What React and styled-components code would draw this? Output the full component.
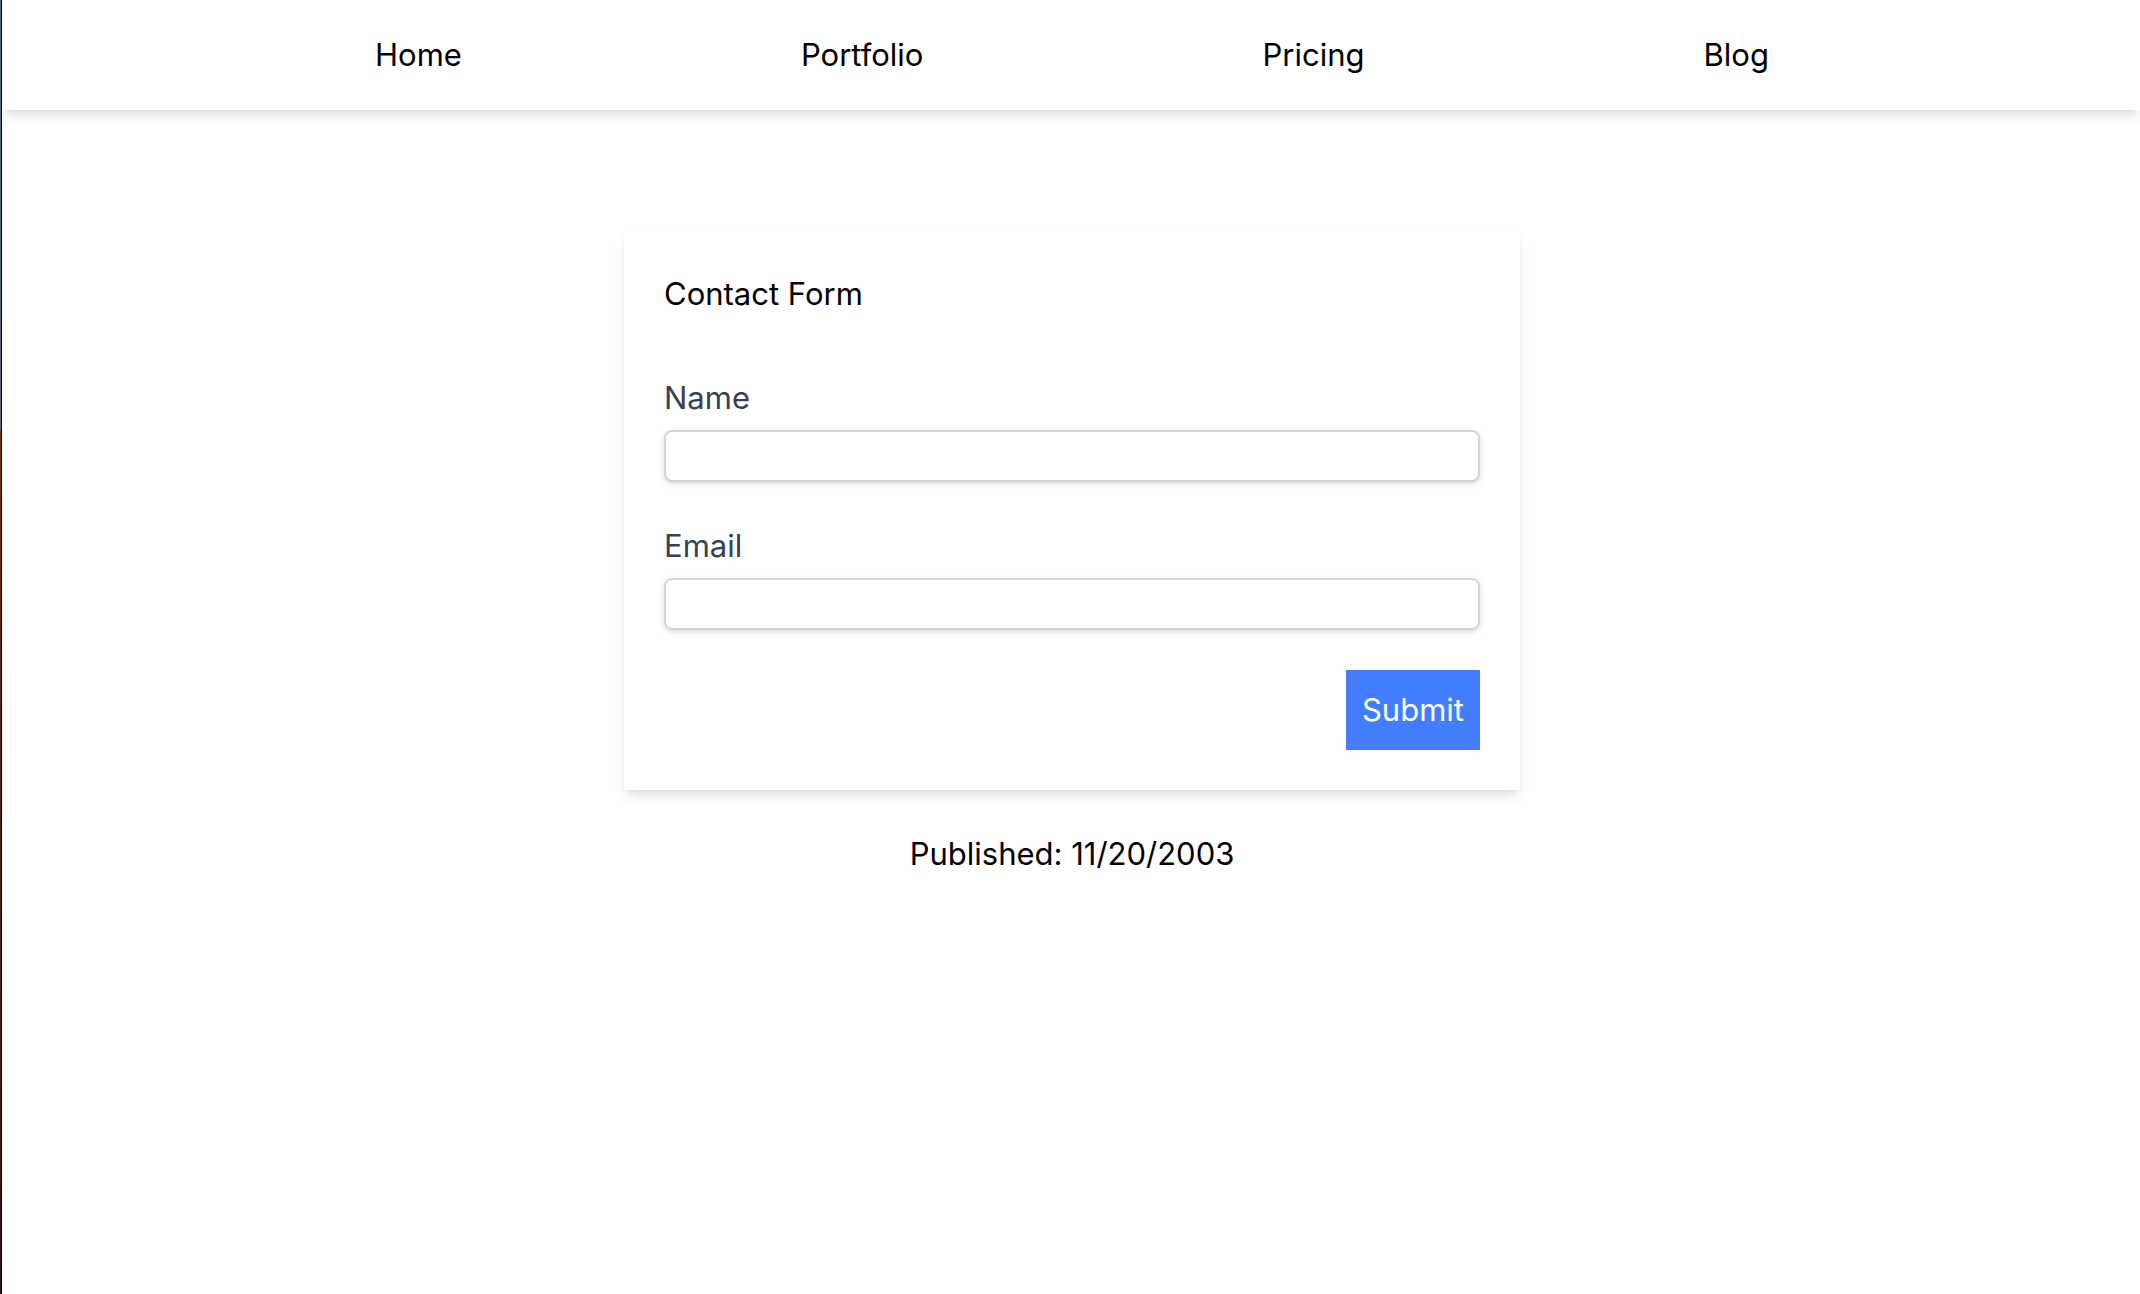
import React from "react";
import styled, { createGlobalStyle } from "styled-components";

const GlobalStyle = createGlobalStyle`
  *, *::before, *::after { box-sizing: border-box; }
  body {
    margin: 0;
    background: #fff;
    color: #000;
    font-family: Inter, "Liberation Sans", sans-serif;
    font-size: 31px;
    line-height: 48px;
  }
`;

const Screen = styled.div`
  display: flex;
  min-height: 100vh;
`;

const Edge = styled.div`
  flex: none;
  width: 2px;
  border-right: 1px solid #000;
  background: linear-gradient(#4e6b8c, #5c6478 431px, #6b3416 431px, #3c1414);
`;

const Page = styled.div`
  flex: 1;
  min-width: 0;
`;

const Nav = styled.nav`
  display: flex;
  justify-content: space-evenly;
  padding: 31px 32px 31px 34px;
  box-shadow: 0 8px 12px -2px rgba(0, 0, 0, 0.1), 0 4px 8px -4px rgba(0, 0, 0, 0.1);
`;

const NavLink = styled.a`
  color: inherit;
  text-decoration: none;
`;

const Main = styled.main`
  display: flex;
  flex-direction: column;
  align-items: center;
  gap: 40px;
  padding: 120px 32px 40px 34px;
`;

const Card = styled.form`
  display: flex;
  flex-direction: column;
  gap: 40px;
  width: 100%;
  max-width: 896px;
  padding: 40px;
  box-shadow: 0 8px 12px -2px rgba(0, 0, 0, 0.1), 0 4px 8px -4px rgba(0, 0, 0, 0.1);
`;

const Title = styled.h1`
  margin: 0 0 16px;
  font: inherit;
`;

const Field = styled.div`
  display: flex;
  flex-direction: column;
  gap: 8px;
`;

const Label = styled.label`
  color: #374151;
`;

const Input = styled.input`
  width: 100%;
  height: 52px;
  padding: 0 12px;
  border: 2px solid #d1d5db;
  border-radius: 8px;
  background: #fff;
  box-shadow: 0 2px 6px rgba(0, 0, 0, 0.1), 0 2px 4px -2px rgba(0, 0, 0, 0.1);
  font: inherit;
`;

const Submit = styled.button`
  align-self: flex-end;
  padding: 16px;
  border: 0;
  background: #427dfe;
  color: #fff;
  font: inherit;
`;

const Published = styled.p`
  margin: 0;
`;

const links = ["Home", "Portfolio", "Pricing", "Blog"];
const fields = [
  { id: "name", label: "Name", type: "text" },
  { id: "email", label: "Email", type: "email" },
];

export default function App() {
  return (
    <>
      <GlobalStyle />
      <Screen>
        <Edge />
        <Page>
          <Nav>
            {links.map((name) => (
              <NavLink key={name} href={`#${name.toLowerCase()}`}>{name}</NavLink>
            ))}
          </Nav>
          <Main>
            <Card onSubmit={(e) => e.preventDefault()}>
              <Title>Contact Form</Title>
              {fields.map(({ id, label, type }) => (
                <Field key={id}>
                  <Label htmlFor={id}>{label}</Label>
                  <Input id={id} name={id} type={type} />
                </Field>
              ))}
              <Submit type="submit">Submit</Submit>
            </Card>
            <Published>Published: 11/20/2003</Published>
          </Main>
        </Page>
      </Screen>
    </>
  );
}
